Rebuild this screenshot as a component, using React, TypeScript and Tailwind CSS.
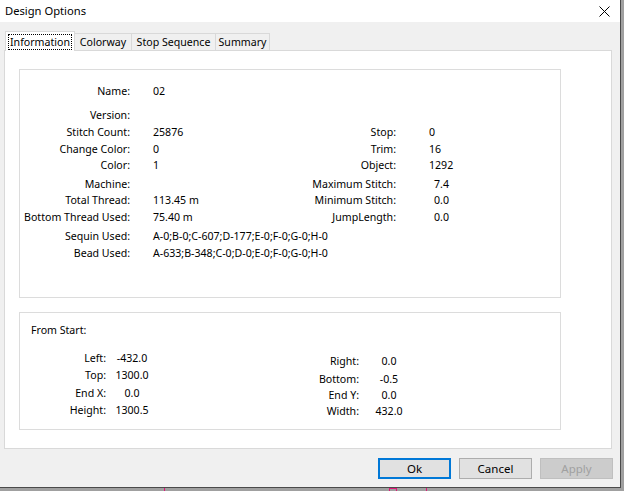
import React from 'react';

const font = { fontFamily: '"Noto Sans", "Segoe UI", sans-serif' };

type Row = { h: string; label: string; value?: string; rLabel?: string; rValue?: string; rPad?: boolean };

const infoRows: Row[] = [
  { h: 'h-[24px]', label: 'Name:', value: '02' },
  { h: 'h-[17px]', label: 'Version:', value: '' },
  { h: 'h-[17px]', label: 'Stitch Count:', value: '25876', rLabel: 'Stop:', rValue: '0' },
  { h: 'h-[16px]', label: 'Change Color:', value: '0', rLabel: 'Trim:', rValue: '16' },
  { h: 'h-[19px]', label: 'Color:', value: '1', rLabel: 'Object:', rValue: '1292' },
  { h: 'h-[16px]', label: 'Machine:', value: '', rLabel: 'Maximum Stitch:', rValue: '7.4', rPad: true },
  { h: 'h-[17px]', label: 'Total Thread:', value: '113.45 m', rLabel: 'Minimum Stitch:', rValue: '0.0', rPad: true },
  { h: 'h-[19px]', label: 'Bottom Thread Used:', value: '75.40 m', rLabel: 'JumpLength:', rValue: '0.0', rPad: true },
  { h: 'h-[17px]', label: 'Sequin Used:', value: 'A-0;B-0;C-607;D-177;E-0;F-0;G-0;H-0' },
  { h: 'h-[16px]', label: 'Bead Used:', value: 'A-633;B-348;C-0;D-0;E-0;F-0;G-0;H-0' },
];

const leftPos = [
  { h: 'h-[17px]', label: 'Left:', value: '-432.0' },
  { h: 'h-[18px]', label: 'Top:', value: '1300.0' },
  { h: 'h-[17px]', label: 'End X:', value: '0.0' },
  { h: 'h-[16px]', label: 'Height:', value: '1300.5' },
];

const rightPos = [
  { h: 'h-[18px]', label: 'Right:', value: '0.0' },
  { h: 'h-[16px]', label: 'Bottom:', value: '-0.5' },
  { h: 'h-[16px]', label: 'End Y:', value: '0.0' },
  { h: 'h-[16px]', label: 'Width:', value: '432.0' },
];

function Tab({ label, w, active }: { label: string; w: string; active?: boolean }) {
  if (active) {
    return (
      <div className={`${w} relative z-10 -mb-px h-[20px] bg-white border border-b-0 border-[#d9d9d9] px-[2px] pt-[2px] ml-px`}>
        <div className="border border-dotted border-black text-center leading-[14px]">{label}</div>
      </div>
    );
  }
  return (
    <div className={`${w} h-[17px] bg-[#f0f0f0] border border-b-0 border-l-0 border-[#d9d9d9] text-center leading-[16px]`}>
      {label}
    </div>
  );
}

function Button({ label, variant }: { label: string; variant?: 'default' | 'disabled' }) {
  const base = 'w-[73px] h-[21px] flex items-center justify-center leading-none text-[11.5px]';
  if (variant === 'default')
    return <div className={`${base} bg-[#e1e1e1] border-2 border-[#0078d7]`}>{label}</div>;
  if (variant === 'disabled')
    return <div className={`${base} bg-[#cccccc] border border-[#bfbfbf] text-[#a0a0a0]`}>{label}</div>;
  return <div className={`${base} bg-[#e1e1e1] border border-[#adadad]`}>{label}</div>;
}

export default function App() {
  return (
    <div className="w-[624px] h-[491px] bg-[#a0a0a0] overflow-hidden relative text-[10.6px] text-black" style={font}>
      {/* window */}
      <div className="w-[621px] h-[488px] border-r border-b border-[#4a4a4a] bg-[#f0f0f0] flex flex-col">
        {/* title bar */}
        <div className="h-[22px] bg-white flex items-center justify-between pl-[5px] pr-[10px]">
          <span className="leading-none text-[11.2px]">Design Options</span>
          <svg width="11" height="11" viewBox="0 0 11 11" className="mt-px">
            <path d="M0.5 0.5 L10.5 10.5 M10.5 0.5 L0.5 10.5" stroke="#000" strokeWidth="1" />
          </svg>
        </div>

        {/* tabs */}
        <div className="pt-[9px] pl-[4px]">
          <div className="flex items-end h-[19px]">
            <Tab label="Information" w="w-[70px]" active />
            <Tab label="Colorway" w="w-[57px]" />
            <Tab label="Stop Sequence" w="w-[84px]" />
            <Tab label="Summary" w="w-[54px]" />
          </div>

          {/* panel */}
          <div className="w-[608px] h-[399px] bg-white border border-[#d9d9d9] pt-[18px] pl-[14px]">
            {/* info group */}
            <div className="w-[542px] h-[229px] border border-[#dcdcdc] pt-[13px]">
              {infoRows.map((r) => (
                <div key={r.label} className={`${r.h} flex items-start leading-[16px] whitespace-nowrap`}>
                  <div className="w-[110px] text-right">{r.label}</div>
                  <div className="w-[118px] ml-[23px]">{r.value}</div>
                  {r.rLabel && (
                    <>
                      <div className="w-[125px] text-right">{r.rLabel}</div>
                      <div className={`ml-[33px] ${r.rPad ? 'pl-[5px]' : ''}`}>{r.rValue}</div>
                    </>
                  )}
                </div>
              ))}
            </div>

            {/* position group */}
            <div className="w-[542px] h-[118px] border border-[#dcdcdc] mt-[14px] pt-[9px]">
              <div className="pl-[11px] leading-[16px]">From Start:</div>
              <div className="flex mt-[12px] leading-[16px] whitespace-nowrap">
                <div>
                  {leftPos.map((r) => (
                    <div key={r.label} className={`${r.h} flex`}>
                      <div className="w-[86px] text-right">{r.label}</div>
                      <div className="w-[40px] ml-[6px] text-center">{r.value}</div>
                    </div>
                  ))}
                </div>
                <div className="ml-[127px] mt-[3px]">
                  {rightPos.map((r) => (
                    <div key={r.label} className={`${r.h} flex`}>
                      <div className="w-[80px] text-right">{r.label}</div>
                      <div className="w-[40px] ml-[10px] text-center">{r.value}</div>
                    </div>
                  ))}
                </div>
              </div>
            </div>
          </div>
        </div>

        {/* buttons */}
        <div className="flex justify-end gap-[8px] pr-[7px] mt-[9px]">
          <Button label="Ok" variant="default" />
          <Button label="Cancel" />
          <Button label="Apply" variant="disabled" />
        </div>
      </div>

      {/* background app marks */}
      <div className="absolute left-[164px] top-[488px] w-px h-[3px] bg-[#e0187a]" />
      <div className="absolute left-[426px] top-[488px] w-px h-[3px] bg-[#e0187a]" />
      <div className="absolute left-[389px] top-[488px] w-[8px] h-[3px] border border-b-0 border-[#e0187a]" />
    </div>
  );
}
